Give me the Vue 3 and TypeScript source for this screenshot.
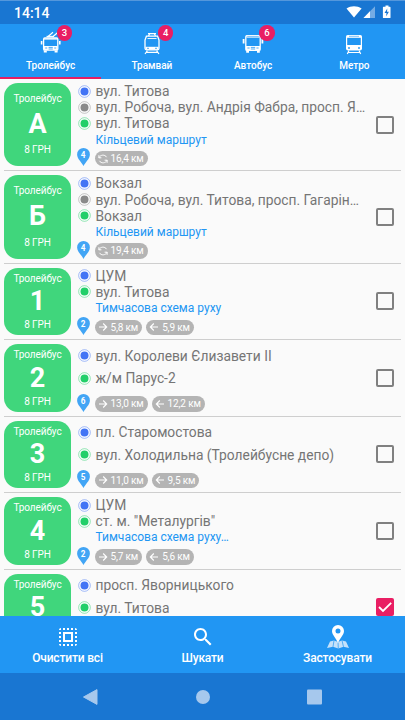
<script setup lang="ts">
interface Stop { color: 'blue' | 'gray' | 'green'; name: string }
interface Distance { kind: 'loop' | 'to' | 'back'; text: string }
interface Route {
  number: string
  stops: Stop[]
  note?: string
  vehicles: number
  distances: Distance[]
  checked?: boolean
}

const tabs = [
  { id: 'trolley', label: 'Тролейбус', badge: 3 },
  { id: 'tram', label: 'Трамвай', badge: 4 },
  { id: 'bus', label: 'Автобус', badge: 6 },
  { id: 'metro', label: 'Метро', badge: 0 },
]

const routes: Route[] = [
  {
    number: 'А',
    stops: [
      { color: 'blue', name: 'вул. Титова' },
      { color: 'gray', name: 'вул. Робоча, вул. Андрія Фабра, просп. Я…' },
      { color: 'green', name: 'вул. Титова' },
    ],
    note: 'Кільцевий маршрут',
    vehicles: 4,
    distances: [{ kind: 'loop', text: '16,4 км' }],
  },
  {
    number: 'Б',
    stops: [
      { color: 'blue', name: 'Вокзал' },
      { color: 'gray', name: 'вул. Робоча, вул. Титова, просп. Гагарін…' },
      { color: 'green', name: 'Вокзал' },
    ],
    note: 'Кільцевий маршрут',
    vehicles: 4,
    distances: [{ kind: 'loop', text: '19,4 км' }],
  },
  {
    number: '1',
    stops: [
      { color: 'blue', name: 'ЦУМ' },
      { color: 'green', name: 'вул. Титова' },
    ],
    note: 'Тимчасова схема руху',
    vehicles: 2,
    distances: [{ kind: 'to', text: '5,8 км' }, { kind: 'back', text: '5,9 км' }],
  },
  {
    number: '2',
    stops: [
      { color: 'blue', name: 'вул. Королеви Єлизавети ІІ' },
      { color: 'green', name: 'ж/м Парус-2' },
    ],
    vehicles: 6,
    distances: [{ kind: 'to', text: '13,0 км' }, { kind: 'back', text: '12,2 км' }],
  },
  {
    number: '3',
    stops: [
      { color: 'blue', name: 'пл. Старомостова' },
      { color: 'green', name: 'вул. Холодильна (Тролейбусне депо)' },
    ],
    vehicles: 5,
    distances: [{ kind: 'to', text: '11,0 км' }, { kind: 'back', text: '9,5 км' }],
  },
  {
    number: '4',
    stops: [
      { color: 'blue', name: 'ЦУМ' },
      { color: 'green', name: 'ст. м. "Металургів"' },
    ],
    note: 'Тимчасова схема руху…',
    vehicles: 2,
    distances: [{ kind: 'to', text: '5,7 км' }, { kind: 'back', text: '5,6 км' }],
  },
  {
    number: '5',
    stops: [
      { color: 'blue', name: 'просп. Яворницького' },
      { color: 'green', name: 'вул. Титова' },
    ],
    vehicles: 0,
    distances: [],
    checked: true,
  },
]
</script>

<template>
  <div class="screen">
    <header class="status">
      <span class="clock">14:14</span>
      <svg class="status-icons" width="46" height="16" viewBox="0 0 46 16">
        <path d="M0.5 4.6C5 1.4 11 1.4 15.6 4.6L8 13.6Z" fill="#fff" />
        <path d="M29 2.2V14H17.5Z" fill="#fff" opacity=".4" />
        <path d="M24 7.3V14H17.5Z" fill="#fff" />
        <path d="M37.7 2.8H39.5V1.6H42.5V2.8H43.9Q44.5 2.8 44.5 3.4V13.4Q44.5 14 43.9 14H37.5Q36.9 14 36.9 13.4V3.4Q36.9 2.8 37.5 2.8Z" fill="#fff" />
        <path d="M41.3 4.6L38.5 9H40.5L40.1 12.4L42.9 7.8H41Z" fill="#1976d2" />
      </svg>
    </header>

    <nav class="tabs">
      <div v-for="(tab, i) in tabs" :key="tab.id" class="tab" :class="{ active: i === 0 }">
        <div class="tab-icon">
          <svg width="22" height="24" viewBox="0 0 22 24" fill="none" stroke="#fff">
            <template v-if="tab.id === 'trolley'">
              <path d="M7.5 6L13 1.2M12.5 6L18 1.2" stroke-width="1.2" />
              <path d="M6.5 5.4H14" stroke-width="1.1" />
              <rect x="3.6" y="7" width="14.2" height="12.2" rx="1.2" stroke-width="1.3" />
              <path d="M4 8H17.5" stroke-width="1.2" />
              <path d="M4 17H17.4" stroke-width="4" />
              <path d="M1.6 10V13.5M19.8 10V13.5" stroke-width="1.6" />
              <path d="M3.8 20.6H6.8M14.6 20.6H17.6" stroke-width="2" />
              <path d="M5.2 17H7.2M14.2 17H16.2M8.6 16.4H12.8M8.6 18H12.8" stroke="#2196f3" stroke-width=".8" />
            </template>
            <template v-else-if="tab.id === 'tram'">
              <path d="M7 2.6H15M8.7 2.8L7.5 5M13.3 2.8L14.5 5" stroke-width="1.2" />
              <path d="M5.4 5.2H16.6L18 9V17.3Q18 18.8 16.6 18.8H5.4Q4 18.8 4 17.3V9Z" stroke-width="1.3" />
              <path d="M6.5 7.5H15.5" stroke-width=".9" />
              <path d="M4.5 17.3H17.5" stroke-width="3" />
              <path d="M6 17.3H8M14 17.3H16" stroke="#2196f3" stroke-width=".8" />
              <path d="M6.4 19.6L4 23M15.6 19.6L18 23M5.4 21.4H16.6" stroke-width="1.2" />
            </template>
            <template v-else-if="tab.id === 'bus'">
              <rect x="3.8" y="4.6" width="14.4" height="14.8" rx="1.2" stroke-width="1.3" />
              <path d="M4.5 5.4H17.5" stroke-width="2.4" />
              <path d="M4 17H18" stroke-width="4" />
              <path d="M1.6 8V12.5M20.4 8V12.5" stroke-width="1.8" />
              <path d="M4.2 20.6H7M15 20.6H17.8" stroke-width="2.2" />
              <path d="M5.4 17H7.6M14.4 17H16.6M8.8 16.4H13.2M8.8 18H13.2" stroke="#2196f3" stroke-width=".8" />
              <path d="M5.2 5.4H16.8" stroke="#2196f3" stroke-width=".6" />
            </template>
            <template v-else>
              <path d="M4.6 4H17.4Q19 4 19 5.5V17.5Q19 19.5 17 19.5H5Q3 19.5 3 17.5V5.5Q3 4 4.6 4Z" fill="#fff" stroke="none" />
              <path d="M4.2 6.8H17.8V14H4.2Z" fill="#2196f3" stroke="none" />
              <path d="M6 5.3H16" stroke="#2196f3" stroke-width=".6" />
              <circle cx="6" cy="17" r=".9" fill="#2196f3" stroke="none" />
              <circle cx="16" cy="17" r=".9" fill="#2196f3" stroke="none" />
              <path d="M6 19.5L4.3 23M16 19.5L17.7 23M5 21.5H17" stroke-width="1.2" />
            </template>
          </svg>
          <span v-if="tab.badge" class="badge">{{ tab.badge }}</span>
        </div>
        <span class="tab-label">{{ tab.label }}</span>
      </div>
    </nav>

    <main class="list">
      <article v-for="route in routes" :key="route.number" class="route" :class="{ tall: route.stops.length > 2, roomy: !route.note }">
        <div class="card">
          <span class="kind">Тролейбус</span>
          <strong class="number">{{ route.number }}</strong>
          <span v-if="route.distances.length" class="price">8 ГРН</span>
        </div>
        <div class="info">
          <div v-for="(stop, i) in route.stops" :key="i" class="stop">
            <svg class="dot" :class="stop.color" width="13" height="13" viewBox="0 0 13 13">
              <circle cx="6.5" cy="6.5" r="5.8" fill="#fff" stroke="currentColor" stroke-width=".9" stroke-opacity=".55" />
              <circle cx="6.5" cy="6.5" r="4" fill="currentColor" />
            </svg>
            <span class="stop-name">{{ stop.name }}</span>
          </div>
          <div v-if="route.note" class="note">{{ route.note }}</div>
          <div v-if="route.distances.length" class="meta">
            <span class="pin">
              <svg width="13" height="18" viewBox="0 0 13 18">
                <path d="M6.5 0A6.4 6.4 0 0 0 .1 6.4C.1 10.8 5 14.4 6.5 18C8 14.4 12.9 10.8 12.9 6.4A6.4 6.4 0 0 0 6.5 0Z" fill="#42a5f5" />
              </svg>
              <b>{{ route.vehicles }}</b>
            </span>
            <span v-for="d in route.distances" :key="d.kind" class="chip">
              <svg v-if="d.kind === 'loop'" width="10" height="10" viewBox="0 0 10 10" fill="none" stroke="#fff" stroke-width="1">
                <path d="M.8 3.8H3.4M.9 1.2V3.8C2.4 .6 6.8 .2 8.6 3.2M9.2 6.2H6.6M9.1 8.8V6.2C7.6 9.4 3.2 9.8 1.4 6.8" />
              </svg>
              <svg v-else :class="{ flip: d.kind === 'back' }" width="10" height="10" viewBox="0 0 10 10" fill="none" stroke="#fff" stroke-width="1.1">
                <path d="M1 5H8.6M5.2 1.5L8.7 5L5.2 8.5" />
              </svg>
              <span>{{ d.text }}</span>
            </span>
          </div>
        </div>
        <span class="check" :class="{ on: route.checked }">
          <svg v-if="route.checked" width="18" height="18" viewBox="0 0 18 18" fill="none" stroke="#fff" stroke-width="1.8">
            <path d="M3 9L7 13L15.2 4.8" />
          </svg>
        </span>
      </article>
    </main>

    <footer class="actions">
      <button class="action">
        <svg width="24" height="24" viewBox="0 0 24 24" fill="#fff">
          <path d="M3 5h2V3c-1.1 0-2 .9-2 2zm0 8h2v-2H3v2zm4 8h2v-2H7v2zM3 9h2V7H3v2zm10-6h-2v2h2V3zm6 0v2h2c0-1.1-.9-2-2-2zM5 21v-2H3c0 1.1.9 2 2 2zm-2-4h2v-2H3v2zM9 3H7v2h2V3zm2 18h2v-2h-2v2zm8-8h2v-2h-2v2zm0 8c1.1 0 2-.9 2-2h-2v2zm0-12h2V7h-2v2zm0 8h2v-2h-2v2zm-4 4h2v-2h-2v2zm0-16h2V3h-2v2zM7 17h10V7H7v10zm2-8h6v6H9V9z" />
        </svg>
        <span>Очистити всі</span>
      </button>
      <button class="action">
        <svg width="24" height="24" viewBox="0 0 24 24" fill="#fff">
          <path d="M15.5 14h-.79l-.28-.27C15.41 12.59 16 11.11 16 9.5 16 5.91 13.09 3 9.5 3S3 5.91 3 9.5 5.91 16 9.5 16c1.61 0 3.09-.59 4.23-1.57l.27.28v.79l5 4.99L20.49 19l-4.99-5zm-6 0C7.01 14 5 11.99 5 9.5S7.01 5 9.5 5 14 7.01 14 9.5 11.99 14 9.5 14z" />
        </svg>
        <span>Шукати</span>
      </button>
      <button class="action">
        <svg width="24" height="24" viewBox="0 0 24 24">
          <path d="M4 16.5L8 15.5L12 17L16 15.5L20 16.5L23 23L17.5 21.8L12.3 23.5L7 21.8L1 23Z" fill="#c4e1fa" />
          <path d="M8 15.5L7 21.8M12 17L12.3 23.5M16 15.5L17.5 21.8" stroke="#2196f3" stroke-width=".7" />
          <path d="M12 0A6 6 0 0 0 6 6C6 10.4 10.3 12.6 12 18.6C13.7 12.6 18 10.4 18 6A6 6 0 0 0 12 0ZM12 3.4A2.5 2.5 0 1 1 12 8.4A2.5 2.5 0 1 1 12 3.4Z" fill="#fff" fill-rule="evenodd" />
        </svg>
        <span>Застосувати</span>
      </button>
    </footer>

    <div class="system">
      <svg width="16" height="18" viewBox="0 0 16 18" fill="#a6c8ed"><path d="M14 1.6V16.4L.5 9Z" stroke="#a6c8ed" stroke-linejoin="round" /></svg>
      <svg width="16" height="18" viewBox="0 0 16 18" fill="#a6c8ed"><circle cx="8" cy="9" r="7" /></svg>
      <svg width="16" height="18" viewBox="0 0 16 18" fill="#a6c8ed"><rect x="0" y="1.500" width="15" height="15" rx="1" /></svg>
    </div>
  </div>
</template>

<style>
body { margin: 0; }
</style>

<style scoped>
.screen {
  width: 405px;
  height: 720px;
  display: flex;
  flex-direction: column;
  overflow: hidden;
  background: #fafafa;
  font-family: Roboto, "Noto Sans", sans-serif;
}
.status {
  box-sizing: border-box;
  flex: none;
  height: 24px;
  display: flex;
  align-items: center;
  justify-content: space-between;
  padding: 0 13px 0 14px;
  background: #1976d2;
  border-top: 1px solid #5497dc;
  color: #fff;
}
.status-icons { position: relative; top: -1px; }
.clock { font-size: 14px; font-weight: 500; }
.tabs {
  flex: none;
  height: 55px;
  display: grid;
  grid-template-columns: repeat(4, 1fr);
  background: #2196f3;
  color: #fff;
}
.tab {
  box-sizing: border-box;
  display: flex;
  flex-direction: column;
  align-items: center;
  padding-top: 7px;
  border-bottom: 2px solid transparent;
}
.tab.active { border-bottom-color: #e91e63; }
.tab-icon { position: relative; height: 24px; }
.tab-icon svg { display: block; }
.badge {
  position: absolute;
  left: 17px;
  top: -6px;
  width: 15.5px;
  height: 15.5px;
  border-radius: 50%;
  background: #e91e63;
  font-size: 9.5px;
  font-weight: 500;
  line-height: 15.5px;
  text-align: center;
}
.tab-label { margin-top: 4px; font-size: 10px; font-weight: 500; line-height: 14px; }
.list { flex: 1; min-height: 0; overflow: hidden; }
.route {
  box-sizing: border-box;
  height: 76.5px;
  display: grid;
  grid-template-columns: 67px 1fr 18px;
  column-gap: 6.5px;
  padding: 4px 7px 4px 0;
  margin: 0 4px;
  border-bottom: 1px solid #cecece;
}
.route.tall { height: 92.3px; }
.card {
  box-sizing: border-box;
  display: flex;
  flex-direction: column;
  align-items: center;
  justify-content: space-between;
  padding: 5px 0 3px;
  border-radius: 14px;
  background: #40d67c;
  color: #fff;
}
.card:not(:has(.price)) { justify-content: flex-start; gap: 1.5px; }
.tall .card { padding: 10px 0 9px; }
.kind, .price { font-size: 10px; letter-spacing: -0.1px; }
.kind { line-height: 12px; }
.number { font-size: 27px; font-weight: 700; line-height: 30px; }
.price { line-height: 14px; }
.info { min-width: 0; display: flex; flex-direction: column; }
.stop { flex: none; height: 16.2px; display: flex; align-items: center; gap: 5px; }
.roomy .stop { height: 22.9px; }
.dot { flex: none; display: block; }
.blue { color: #4274f5; }
.gray { color: #8a8a8a; }
.green { color: #22cf69; }
.stop-name { font-size: 13.8px; line-height: 16px; color: #757575; white-space: nowrap; }
.note { margin-left: 18px; font-size: 12px; line-height: 16px; color: #2196f3; white-space: nowrap; }
.meta { margin-top: auto; display: flex; align-items: flex-end; gap: 4px; }
.pin { position: relative; left: -1px; width: 13px; height: 18px; }
.pin svg { display: block; }
.pin b {
  position: absolute;
  inset: 0 0 auto;
  font-size: 8.2px;
  line-height: 14px;
  text-align: center;
  color: #fff;
}
.chip {
  display: flex;
  align-items: center;
  gap: 3px;
  height: 15.5px;
  padding: 0 4px 0 3px;
  border-radius: 8px;
  background: #b4b4b4;
  color: #fff;
  font-size: 10px;
  letter-spacing: -0.15px;
  line-height: 15px;
}
.flip { transform: scaleX(-1); }
.check {
  box-sizing: border-box;
  align-self: center;
  width: 18px;
  height: 18px;
  border: 2px solid #808080;
  border-radius: 2px;
}
.check.on { border: 0; background: #e91e63; }
.check svg { display: block; }
.actions {
  flex: none;
  height: 57px;
  display: grid;
  grid-template-columns: repeat(3, 1fr);
  background: #2196f3;
}
.action {
  display: flex;
  flex-direction: column;
  align-items: center;
  gap: 1px;
  padding: 9px 0 0;
  border: 0;
  background: none;
  color: #fff;
  font: 500 12px/16px Roboto, "Noto Sans", sans-serif;
  letter-spacing: -0.17px;
}
.system {
  flex: none;
  height: 47px;
  display: flex;
  align-items: center;
  justify-content: center;
  gap: 96px;
  background: #1976d2;
}
</style>
